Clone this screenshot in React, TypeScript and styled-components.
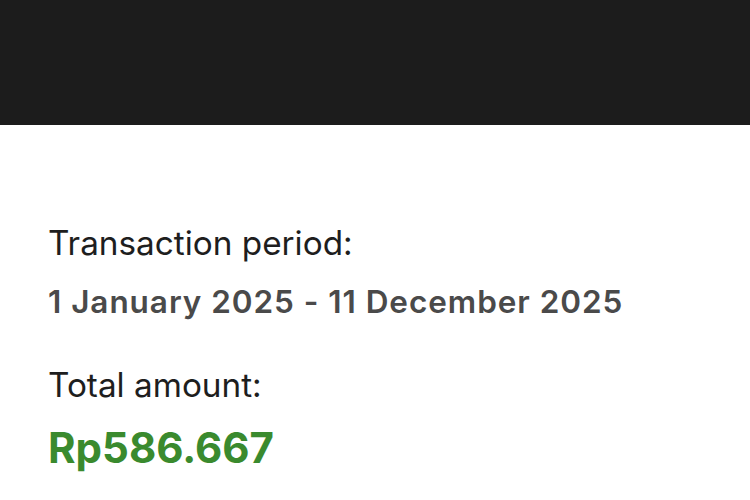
import React from "react";
import styled, { createGlobalStyle } from "styled-components";

const Global = createGlobalStyle`
  html, body { margin: 0; padding: 0; background: #ffffff; }
  body { font-family: Inter, "Noto Sans", sans-serif; }
`;

const Page = styled.div`
  width: 750px;
  height: 500px;
  display: flex;
  flex-direction: column;
  overflow: hidden;
  background: #ffffff;
`;

const TopBar = styled.div`
  height: 125px;
  background: #1c1c1c;
  flex-shrink: 0;
`;

const Content = styled.div`
  padding: 98px 48px 0 48px;
  display: flex;
  flex-direction: column;
`;

const Label = styled.div<{ $gap?: number }>`
  font-family: Inter, sans-serif;
  font-size: 33.3px;
  font-weight: 400;
  color: #1e1e1e;
  line-height: 40px;
  margin-top: ${(p) => p.$gap ?? 0}px;
`;

const Period = styled.div`
  font-family: Inter, sans-serif;
  font-size: 31.5px;
  font-weight: 600;
  letter-spacing: 0.95px;
  color: #4a4a4a;
  line-height: 40px;
  margin-top: 19px;
  white-space: nowrap;
`;

const Amount = styled.div`
  font-family: Inter, sans-serif;
  font-size: 42px;
  font-weight: 700;
  color: #3a8a2e;
  line-height: 52px;
  margin-top: 17px;
`;

export default function App() {
  return (
    <Page>
      <Global />
      <TopBar />
      <Content>
        <Label>Transaction period:</Label>
        <Period>1 January 2025 - 11 December 2025</Period>
        <Label $gap={43}>Total amount:</Label>
        <Amount>Rp586.667</Amount>
      </Content>
    </Page>
  );
}
